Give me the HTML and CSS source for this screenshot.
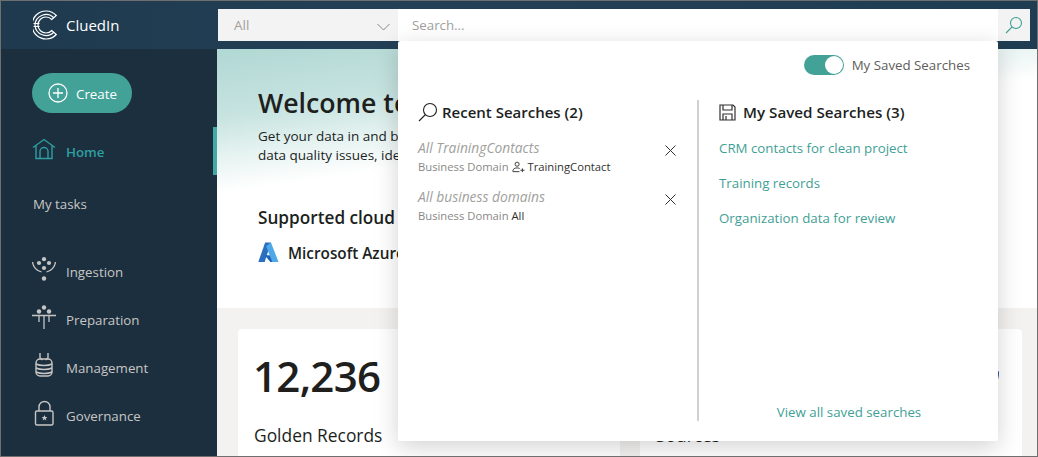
FILE: index.html
```html
<!DOCTYPE html>
<html lang="en">
<head>
    <meta charset="UTF-8">
    <meta name="viewport" content="width=device-width, initial-scale=1.0">
    <title>CluedIn: Home</title>
    <link rel="stylesheet" href="styles.css">
</head>
<body>
    <div class="app">
        <header class="topbar">
            <div class="brand">
                <svg class="brand-logo" width="26" height="30" viewBox="0 0 26 30" fill="none" stroke="#fff" stroke-width="1.200">
                    <path d="M23.300 5.500A14 14 0 1 0 23.300 24.500L18.800 20.500A8 8 0 1 1 18.800 9.500z"/>
                    <path d="M21 8A11 11 0 0 0 2 15a11 11 0 0 0 19 7"/>
                    <path d="M.5 13.500h6M.5 16.500h6" stroke-width="1"/>
                </svg>
                <span class="brand-name">CluedIn</span>
            </div>
            <div class="searchbar">
                <div class="scope">
                    <span>All</span>
                    <svg width="13" height="8" viewBox="0 0 13 8" fill="none" stroke="#8a8886" stroke-width="1"><path d="M.5 1l6 6 6-6"/></svg>
                </div>
                <div class="search-input">Search...</div>
                <div class="search-btn">
                    <svg width="18" height="18" viewBox="0 0 18 18" fill="none" stroke="#3f9f96" stroke-width="1.100"><circle cx="11" cy="7" r="5.500"/><path d="M7 11l-6 6"/></svg>
                </div>
            </div>
        </header>

        <div class="layout">
            <nav class="sidebar">
                <button class="create-btn">
                    <svg width="20" height="20" viewBox="0 0 20 20" fill="none" stroke="#fff" stroke-width="1.300"><circle cx="10" cy="10" r="9"/><path d="M10 5v10M5 10h10"/></svg>
                    <span class="create-label">Create</span>
                </button>
                <a class="nav-item active">
                    <svg width="24" height="22" viewBox="0 0 24 22" fill="none" stroke="#2f9ea0" stroke-width="1.400"><path d="M1 9.500L12 1.500l11 8"/><path d="M4 7.500V20.500h16V7.500"/><path d="M8 20.500v-7a4 4 0 0 1 8 0v7"/></svg>
                    <span>Home</span>
                </a>
                <a class="nav-item plain">My tasks</a>
                <a class="nav-item tools">
                    <svg width="24" height="24" viewBox="0 0 24 24" fill="#c8c6c4" stroke="none">
                        <circle cx="12" cy="2.200" r="2.100"/><circle cx="7" cy="6" r="2.100"/><circle cx="17" cy="6" r="2.100"/><circle cx="12" cy="11" r="2.100"/><circle cx="12" cy="21.500" r="2.200"/>
                        <path d="M.5 5c.6 4.800 4 8.500 9 10M23.500 5c-.6 4.800-4 8.500-9 10" fill="none" stroke="#c8c6c4" stroke-width="1.300"/>
                    </svg>
                    <span>Ingestion</span>
                </a>
                <a class="nav-item">
                    <svg width="24" height="24" viewBox="0 0 24 24" fill="#c8c6c4" stroke="none">
                        <circle cx="12" cy="2.500" r="2.200"/><circle cx="7" cy="6.500" r="2.200"/><circle cx="17" cy="6.500" r="2.200"/>
                        <path d="M0 10.500h24M7 11v6M17 11v6M12 11v13" fill="none" stroke="#c8c6c4" stroke-width="1.300"/>
                    </svg>
                    <span>Preparation</span>
                </a>
                <a class="nav-item">
                    <svg width="24" height="26" viewBox="0 0 24 26" fill="none" stroke="#c8c6c4" stroke-width="1.400">
                        <path d="M8 1v5l2.500 2M16 1v5l-2.500 2"/>
                        <rect x="4" y="7" width="16" height="17" rx="4"/>
                        <path d="M4 12c4 2 12 2 16 0M4 16c4 2 12 2 16 0M4 20c4 2 12 2 16 0"/>
                    </svg>
                    <span>Management</span>
                </a>
                <a class="nav-item">
                    <svg width="24" height="26" viewBox="0 0 24 26" fill="none" stroke="#c8c6c4" stroke-width="1.400">
                        <rect x="3.500" y="11" width="17.500" height="14" rx="1.500"/>
                        <path d="M7 11V7a5.500 5.500 0 0 1 11 0v4"/>
                        <path d="M12.500 15l.9 2h2l-1.600 1.400.6 2.100-1.900-1.200-1.900 1.200.6-2.100L9.600 17h2z" fill="#c8c6c4" stroke="none"/>
                    </svg>
                    <span>Governance</span>
                </a>
            </nav>

            <main class="content">
                <section class="hero">
                    <div class="hero-banner">
                        <h1>Welcome to</h1>
                        <p>Get your data in and bu</p>
                        <p>data quality issues, ide</p>
                    </div>
                    <h2>Supported cloud</h2>
                    <div class="provider">
                        <svg width="21" height="21" viewBox="0 0 22 21">
                            <path d="M7.500 0h6L7 20.500H.3z" fill="#2a6fc0"/>
                            <path d="M16.500 13.500H7l6 7h8z" fill="#1d63b8"/>
                            <path d="M13.500 0h.1l7.900 20.500H15L8.500 4z" fill="#4fa8e8"/>
                        </svg>
                        <span>Microsoft Azure</span>
                    </div>
                </section>
                <section class="cards">
                    <div class="card">
                        <div class="card-number">12,236</div>
                        <div class="card-label">Golden Records</div>
                    </div>
                    <div class="card">
                        <span class="card-mark"></span>
                        <div class="card-number">&nbsp;</div>
                        <div class="card-label">Sources</div>
                    </div>
                </section>
            </main>
        </div>

        <div class="search-panel">
            <div class="panel-toggle">
                <span class="toggle"><span class="toggle-knob"></span></span>
                <span>My Saved Searches</span>
            </div>
            <div class="panel-cols">
                <div class="recent">
                    <h3>
                        <svg width="20" height="20" viewBox="0 0 20 20" fill="none" stroke="#201f1e" stroke-width="1.100"><circle cx="12" cy="8" r="6.500"/><path d="M7.500 12.500L1 19"/></svg>
                        Recent Searches (2)
                    </h3>
                    <div class="recent-item">
                        <div>
                            <div class="recent-name">All TrainingContacts</div>
                            <div class="recent-meta">Business Domain
                                <svg width="13" height="12" viewBox="0 0 14 12" fill="none" stroke="#323130" stroke-width="1"><circle cx="5.500" cy="3" r="2.200"/><path d="M1 11v-1c0-2 2-3 4.500-3 1 0 2 .2 2.800.6M1 11h7M9 9.500h4.500M11.200 7.500v4"/></svg>
                                <b>TrainingContact</b></div>
                        </div>
                        <svg class="close" width="11" height="11" viewBox="0 0 11 11" stroke="#323130" stroke-width="1"><path d="M.5.500l10 10M10.500.500l-10 10"/></svg>
                    </div>
                    <div class="recent-item">
                        <div>
                            <div class="recent-name">All business domains</div>
                            <div class="recent-meta">Business Domain <b>All</b></div>
                        </div>
                        <svg class="close" width="11" height="11" viewBox="0 0 11 11" stroke="#323130" stroke-width="1"><path d="M.5.500l10 10M10.500.500l-10 10"/></svg>
                    </div>
                </div>
                <div class="saved">
                    <h3>
                        <svg width="17" height="17" viewBox="0 0 17 17" fill="none" stroke="#323130" stroke-width="1.200"><path d="M1 1h13l2 2v13H1z"/><path d="M4 1v5h9V1M4 16v-6h9v6M7 12v4"/></svg>
                        My Saved Searches (3)
                    </h3>
                    <a class="saved-link">CRM contacts for clean project</a>
                    <a class="saved-link">Training records</a>
                    <a class="saved-link">Organization data for review</a>
                    <a class="view-all">View all saved searches</a>
                </div>
            </div>
        </div>
    </div>
</body>
</html>
```

FILE: styles.css
```css
* {
    box-sizing: border-box;
}
html, body {
    margin: 0;
    height: 100%;
    overflow: hidden;
}
body {
    font-family: "Open Sans", "Noto Sans", Arial, sans-serif;
    font-size: 13.3px;
    color: #201f1e;
}
.app {
    position: relative;
    width: 1038px;
    height: 457px;
    border: 1px solid #6f6f6f;
    overflow: hidden;
    display: flex;
    flex-direction: column;
}
.topbar {
    height: 48px;
    flex: none;
    display: flex;
    align-items: flex-start;
    background: linear-gradient(90deg, #1f3a4e, #234057 40%, #1f3d52);
}
.brand {
    width: 217px;
    flex: none;
    padding: 9px 0 0 32px;
    display: flex;
    align-items: center;
    gap: 7px;
    color: #fff;
}
.brand-name {
    font-size: 15px;
}
.searchbar {
    margin-top: 8px;
    display: flex;
    height: 32px;
    width: 812px;
    background: #fff;
    border-radius: 2px;
}
.scope {
    width: 180px;
    background: #f3f3f3;
    color: #a19f9d;
    padding: 0 8px 0 16px;
    display: flex;
    align-items: center;
    justify-content: space-between;
    font-size: 13.500px;
}
.scope svg {
    margin-top: 4px;
}
.search-input {
    width: 600px;
    padding-left: 14px;
    line-height: 32px;
    color: #a19f9d;
}
.search-btn {
    width: 32px;
    background: #f3f3f3;
    display: flex;
    align-items: center;
    justify-content: center;
}
.layout {
    flex: 1;
    display: flex;
    min-height: 0;
}
.sidebar {
    width: 216px;
    flex: none;
    background: #1b2f3f;
    padding: 24px 0 0 31px;
    color: #c8c6c4;
}
.create-btn {
    width: 100px;
    height: 40px;
    border: none;
    border-radius: 20px;
    background: #43a298;
    color: #fff;
    font: inherit;
    padding: 0 0 0 16px;
    display: flex;
    align-items: center;
    gap: 8px;
    margin-bottom: 14px;
}
.create-label {
    margin-top: 2px;
}
.nav-item {
    height: 48px;
    padding-top: 2px;
    display: flex;
    align-items: center;
    gap: 10px;
}
.nav-item svg {
    flex: none;
    margin-top: -6px;
}
.active {
    color: #2f9ea0;
    font-weight: 600;
    border-right: 4px solid #43a9a5;
}
.plain {
    margin-top: 4px;
    padding-left: 1px;
}
.tools {
    margin-top: 20px;
}
.content {
    flex: 1;
    background: #f3f2f1;
    min-width: 0;
}
.hero {
    height: 259px;
    background: #fff;
}
.hero-banner {
    height: 143px;
    padding: 37px 0 0 41px;
    background: linear-gradient(172deg, #b1d8d4 0%, #c6e3e0 26%, #e6f3f1 42%, #fff 56%);
}
.hero h1 {
    margin: 0 0 7px;
    font-size: 26.700px;
    font-weight: 600;
    line-height: 34px;
}
.hero p {
    margin: 0;
    font-size: 13.500px;
    line-height: 19px;
}
.hero h2 {
    margin: 14px 0 12px 41px;
    font-size: 17.200px;
    font-weight: 600;
    line-height: 24px;
}
.provider {
    margin-left: 41px;
    display: flex;
    align-items: center;
    gap: 9px;
    font-size: 15.300px;
    font-weight: 600;
}
.provider svg {
    flex: none;
}
.cards {
    display: flex;
    gap: 20px;
    padding: 21px 15px 0 21px;
}
.card {
    position: relative;
    flex: 1;
    height: 140px;
    background: #fff;
    border-radius: 4px;
    padding: 14px 16px;
}
.card-mark {
    position: absolute;
    right: 23px;
    top: 42px;
    width: 3px;
    height: 8px;
    border-radius: 1px;
    background: linear-gradient(#3a5fb0 50%, #e8c8d0);
}
.card-number {
    margin-left: -1px;
    font-size: 42px;
    line-height: 66px;
    font-weight: 600;
    letter-spacing: -0.7px;
}
.card-label {
    margin-top: 14px;
    font-size: 17.400px;
    font-weight: 500;
}
.search-panel {
    position: absolute;
    left: 397px;
    top: 40px;
    width: 600px;
    height: 400px;
    background: #fff;
    border-radius: 2px;
    box-shadow: 0 6px 24px rgba(0,0,0,0.18);
    padding: 14px 28px 20px 20px;
    display: flex;
    flex-direction: column;
}
.panel-toggle {
    display: flex;
    justify-content: flex-end;
    align-items: center;
    gap: 8px;
    color: #605e5c;
}
.toggle {
    width: 40px;
    height: 20px;
    border-radius: 10px;
    background: #43a298;
    display: flex;
    justify-content: flex-end;
    padding: 1px;
}
.toggle-knob {
    width: 18px;
    height: 18px;
    border-radius: 50%;
    background: #fff;
}
.panel-cols {
    flex: 1;
    display: flex;
    margin-top: 25px;
}
.recent {
    width: 281px;
    border-right: 2px solid #d2d0ce;
    padding-right: 21px;
}
.saved {
    flex: 1;
    padding-left: 20px;
    display: flex;
    flex-direction: column;
}
.search-panel h3 {
    margin: 0 0 15px;
    font-size: 15px;
    font-weight: 600;
    line-height: 24px;
    display: flex;
    align-items: center;
    gap: 4px;
}
.search-panel .recent h3 {
    margin-bottom: 14px;
}
.saved h3 {
    font-size: 15.200px;
    gap: 7px;
}
.recent-item {
    display: flex;
    justify-content: space-between;
    align-items: flex-start;
    margin-bottom: 11px;
}
.close {
    margin-top: 7px;
}
.recent-name {
    font-size: 13.800px;
    font-style: italic;
    color: #a19f9d;
    line-height: 19px;
}
.recent-meta {
    font-size: 11.250px;
    color: #8a8886;
    line-height: 19px;
}
.recent-meta b {
    font-weight: 400;
    color: #323130;
}
.recent-meta svg {
    vertical-align: -2px;
}
.saved-link {
    color: #3f9f96;
    line-height: 18px;
    margin-bottom: 17px;
}
.view-all {
    margin-top: auto;
    padding-left: 9px;
    color: #3f9f96;
    text-align: center;
    line-height: 18px;
}
```
